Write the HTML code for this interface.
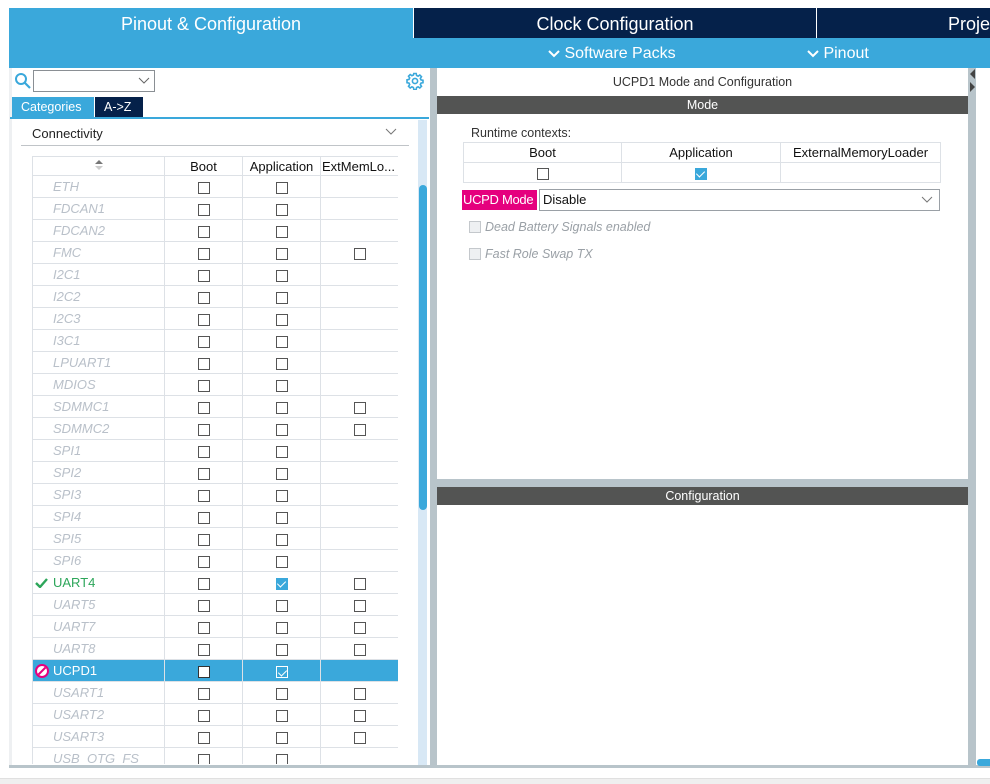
<!DOCTYPE html>
<html><head><meta charset="utf-8">
<style>
*{margin:0;padding:0;box-sizing:border-box}
body{width:990px;height:784px;position:relative;overflow:hidden;background:#fff;font-family:"Liberation Sans",sans-serif;font-size:13px;color:#222}
.a{position:absolute}
.blue{background:#3aa8db}
.navy{background:#05214a}
table{border-collapse:collapse;table-layout:fixed}
#lt td{border:1px solid #dde1e6;height:22px;padding:0;text-align:center;vertical-align:middle}
#lt td.n{text-align:left;padding-left:20px;font-style:italic;color:#b9c0c9;font-size:13px}
.cb{display:inline-block;width:12px;height:12px;border:1px solid #555;vertical-align:middle;background:#fff}
.ck{display:inline-block;width:12px;height:12px;background:#3aa8db;vertical-align:middle;position:relative}
.ck:after{content:"";position:absolute;left:3px;top:1px;width:4px;height:7px;border:solid #fff;border-width:0 1.5px 1.5px 0;transform:rotate(45deg)}
#lt tr.sel td{background:#3aa8db;border-color:#dde1e6}
#lt tr.sel td.n{color:#fff;font-style:normal}
#rt td{border:1px solid #dde1e6;text-align:center;height:20px;font-size:13px;color:#111}
</style></head><body>
<div class="a blue" style="left:9px;top:8px;width:404px;height:60px"></div>
<div class="a" style="left:9px;top:14px;width:404px;text-align:center;color:#fff;font-size:18px">Pinout &amp; Configuration</div>
<div class="a navy" style="left:414px;top:8px;width:402px;height:30px"></div>
<div class="a" style="left:414px;top:14px;width:402px;text-align:center;color:#fff;font-size:18px">Clock Configuration</div>
<div class="a navy" style="left:817px;top:8px;width:173px;height:30px"></div>
<div class="a" style="left:948px;top:14px;color:#fff;font-size:18px">Proje</div>
<div class="a blue" style="left:9px;top:38px;width:981px;height:30px"></div>
<div class="a" style="left:548px;top:45px;color:#fff;font-size:16px;white-space:nowrap"><svg width="12" height="10" style="vertical-align:middle"><path d="M1 2l5 5 5-5" stroke="#fff" stroke-width="2" fill="none"/></svg> Software Packs</div>
<div class="a" style="left:807px;top:45px;color:#fff;font-size:16px;white-space:nowrap"><svg width="12" height="10" style="vertical-align:middle"><path d="M1 2l5 5 5-5" stroke="#fff" stroke-width="2" fill="none"/></svg> Pinout</div>

<div class="a" style="left:9px;top:68px;width:3px;height:700px;background:#eef0f2"></div>
<svg class="a" style="left:14px;top:72px" width="18" height="18"><circle cx="7" cy="7" r="5" stroke="#3aa8db" stroke-width="2" fill="none"/><path d="M11 11l5 5" stroke="#3aa8db" stroke-width="2.2"/></svg>
<div class="a" style="left:33px;top:70px;width:122px;height:22px;border:1px solid #8a8f94;background:#fff"></div>
<svg class="a" style="left:138px;top:77px" width="12" height="8"><path d="M1 1l5 5 5-5" stroke="#666" fill="none"/></svg>
<svg class="a" style="left:406px;top:72px" width="18" height="18" viewBox="0 0 18 18"><g fill="none" stroke="#3aa8db" stroke-width="1.6"><circle cx="9" cy="9" r="2.6"/><path d="M7.8 1.5h2.4l.4 2 1.5.7 1.7-1.2 1.7 1.7-1.2 1.7.7 1.5 2 .4v2.4l-2 .4-.7 1.5 1.2 1.7-1.7 1.7-1.7-1.2-1.5.7-.4 2H7.8l-.4-2-1.5-.7-1.7 1.2-1.7-1.7 1.2-1.7-.7-1.5-2-.4V7.8l2-.4.7-1.5-1.2-1.7 1.7-1.7 1.7 1.2 1.5-.7z"/></g></svg>
<div class="a blue" style="left:12px;top:97px;width:82px;height:20px;color:#fff;font-size:12.5px;padding:3px 0 0 9px">Categories</div>
<div class="a navy" style="left:95px;top:97px;width:48px;height:20px;color:#fff;font-size:12.5px;padding:3px 0 0 9px">A-&gt;Z</div>
<div class="a blue" style="left:10px;top:117px;width:419px;height:2px"></div>
<div class="a" style="left:32px;top:126px;font-size:13px;color:#222">Connectivity</div>
<svg class="a" style="left:385px;top:128px" width="12" height="8"><path d="M1 1l5 5 5-5" stroke="#777" fill="none"/></svg>
<div class="a" style="left:21px;top:145px;width:388px;height:1px;background:#c0c4c8"></div>
<div class="a" style="left:418px;top:120px;width:9px;height:645px;background:#d8e8f5"></div>
<div class="a" style="left:419px;top:185px;width:8px;height:325px;background:#3aa8db;border-radius:4px"></div>

<div class="a" style="left:32px;top:156px;width:366px;height:608px;overflow:hidden">
<table id="lt" style="width:366px">
<colgroup><col style="width:132px"><col style="width:78px"><col style="width:78px"><col style="width:78px"></colgroup>
<tr><td style="height:19px"><svg width="10" height="12"><path d="M1 5l4-4 4 4z" fill="#777"/><path d="M1 7l4 4 4-4z" fill="#ccc"/></svg></td><td style="height:19px;color:#111">Boot</td><td style="height:19px;color:#111">Application</td><td style="height:19px;color:#111;text-align:left;padding-left:1px">ExtMemLo...</td></tr>
<tr><td class="n">ETH</td><td><span class="cb"></span></td><td><span class="cb"></span></td><td></td></tr>
<tr><td class="n">FDCAN1</td><td><span class="cb"></span></td><td><span class="cb"></span></td><td></td></tr>
<tr><td class="n">FDCAN2</td><td><span class="cb"></span></td><td><span class="cb"></span></td><td></td></tr>
<tr><td class="n">FMC</td><td><span class="cb"></span></td><td><span class="cb"></span></td><td><span class="cb"></span></td></tr>
<tr><td class="n">I2C1</td><td><span class="cb"></span></td><td><span class="cb"></span></td><td></td></tr>
<tr><td class="n">I2C2</td><td><span class="cb"></span></td><td><span class="cb"></span></td><td></td></tr>
<tr><td class="n">I2C3</td><td><span class="cb"></span></td><td><span class="cb"></span></td><td></td></tr>
<tr><td class="n">I3C1</td><td><span class="cb"></span></td><td><span class="cb"></span></td><td></td></tr>
<tr><td class="n">LPUART1</td><td><span class="cb"></span></td><td><span class="cb"></span></td><td></td></tr>
<tr><td class="n">MDIOS</td><td><span class="cb"></span></td><td><span class="cb"></span></td><td></td></tr>
<tr><td class="n">SDMMC1</td><td><span class="cb"></span></td><td><span class="cb"></span></td><td><span class="cb"></span></td></tr>
<tr><td class="n">SDMMC2</td><td><span class="cb"></span></td><td><span class="cb"></span></td><td><span class="cb"></span></td></tr>
<tr><td class="n">SPI1</td><td><span class="cb"></span></td><td><span class="cb"></span></td><td></td></tr>
<tr><td class="n">SPI2</td><td><span class="cb"></span></td><td><span class="cb"></span></td><td></td></tr>
<tr><td class="n">SPI3</td><td><span class="cb"></span></td><td><span class="cb"></span></td><td></td></tr>
<tr><td class="n">SPI4</td><td><span class="cb"></span></td><td><span class="cb"></span></td><td></td></tr>
<tr><td class="n">SPI5</td><td><span class="cb"></span></td><td><span class="cb"></span></td><td></td></tr>
<tr><td class="n">SPI6</td><td><span class="cb"></span></td><td><span class="cb"></span></td><td></td></tr>
<tr><td class="n" style="color:#2da65a;font-style:normal;position:relative"><svg style="position:absolute;left:2px;top:6px" width="13" height="10"><path d="M1 5l4 4 7-8" stroke="#2da65a" stroke-width="2.4" fill="none"/></svg>UART4</td><td><span class="cb"></span></td><td><span class="ck"></span></td><td><span class="cb"></span></td></tr>
<tr><td class="n">UART5</td><td><span class="cb"></span></td><td><span class="cb"></span></td><td><span class="cb"></span></td></tr>
<tr><td class="n">UART7</td><td><span class="cb"></span></td><td><span class="cb"></span></td><td><span class="cb"></span></td></tr>
<tr><td class="n">UART8</td><td><span class="cb"></span></td><td><span class="cb"></span></td><td><span class="cb"></span></td></tr>
<tr class="sel"><td class="n" style="position:relative"><svg style="position:absolute;left:2px;top:4px" width="14" height="14"><circle cx="7" cy="7" r="6" fill="#fff" stroke="#e5007e" stroke-width="2"/><path d="M3.5 10.5l7-7" stroke="#e5007e" stroke-width="2"/></svg>UCPD1</td><td><span class="cb" style="border-color:#333"></span></td><td><span class="ck" style="border:1px solid #fff"></span></td><td></td></tr>
<tr><td class="n">USART1</td><td><span class="cb"></span></td><td><span class="cb"></span></td><td><span class="cb"></span></td></tr>
<tr><td class="n">USART2</td><td><span class="cb"></span></td><td><span class="cb"></span></td><td><span class="cb"></span></td></tr>
<tr><td class="n">USART3</td><td><span class="cb"></span></td><td><span class="cb"></span></td><td><span class="cb"></span></td></tr>
<tr><td class="n">USB_OTG_FS</td><td><span class="cb"></span></td><td><span class="cb"></span></td><td></td></tr>
</table></div>

<div class="a" style="left:9px;top:765px;width:421px;height:3px;background:#b8c4ca"></div>
<div class="a" style="left:430px;top:68px;width:7px;height:700px;background:#b8c4ca"></div>
<div class="a" style="left:0;top:768px;width:990px;height:16px;background:#fff"></div>
<div class="a" style="left:0;top:778px;width:990px;height:6px;background:#efefef;border-top:1px solid #e0e0e0"></div>

<div class="a" style="left:437px;top:75px;width:531px;text-align:center;font-size:12.5px;color:#333">UCPD1 Mode and Configuration</div>
<div class="a" style="left:437px;top:96px;width:531px;height:18px;background:#535453;color:#fff;text-align:center;font-size:12.5px;line-height:18px">Mode</div>
<div class="a" style="left:471px;top:126px;font-size:12.5px;color:#333">Runtime contexts:</div>
<table id="rt" class="a" style="left:463px;top:142px;width:477px">
<colgroup><col style="width:158px"><col style="width:159px"><col style="width:160px"></colgroup>
<tr><td>Boot</td><td>Application</td><td>ExternalMemoryLoader</td></tr>
<tr><td><span class="cb"></span></td><td><span class="ck"></span></td><td></td></tr>
</table>
<div class="a" style="left:462px;top:190px;width:75px;height:20px;background:#e5007e;color:#fff;font-size:13px;line-height:20px;padding-left:1px;white-space:nowrap;letter-spacing:-0.3px;overflow:hidden">UCPD Mode</div>
<div class="a" style="left:539px;top:189px;width:401px;height:22px;border:1px solid #9aa0a6;font-size:13px;line-height:20px;padding-left:3px;color:#111">Disable</div>
<svg class="a" style="left:921px;top:196px" width="12" height="8"><path d="M1 1l5 5 5-5" stroke="#777" fill="none"/></svg>
<div class="a" style="left:469px;top:221px;width:12px;height:12px;border:1px solid #c4c8cc;background:#eef0f2"></div>
<div class="a" style="left:485px;top:220px;font-style:italic;color:#9aa0a6;font-size:12.5px">Dead Battery Signals enabled</div>
<div class="a" style="left:469px;top:248px;width:12px;height:12px;border:1px solid #c4c8cc;background:#eef0f2"></div>
<div class="a" style="left:485px;top:247px;font-style:italic;color:#9aa0a6;font-size:12.5px">Fast Role Swap TX</div>
<div class="a" style="left:437px;top:479px;width:531px;height:8px;background:#b8c4ca"></div>
<div class="a" style="left:437px;top:487px;width:531px;height:18px;background:#535453;color:#fff;text-align:center;font-size:12.5px;line-height:18px">Configuration</div>
<div class="a" style="left:437px;top:765px;width:553px;height:3px;background:#b8c4ca"></div>
<div class="a" style="left:968px;top:68px;width:8px;height:700px;background:#b8c4ca"></div>
<svg class="a" style="left:968px;top:68px" width="8" height="30"><path d="M7 1L2 6l5 5z" fill="#444"/><path d="M2 14l5 5-5 5z" fill="#444"/></svg>
<div class="a" style="left:977px;top:759px;width:13px;height:7px;background:#3aa8db;border-radius:3px 0 0 3px"></div>
</body></html>
